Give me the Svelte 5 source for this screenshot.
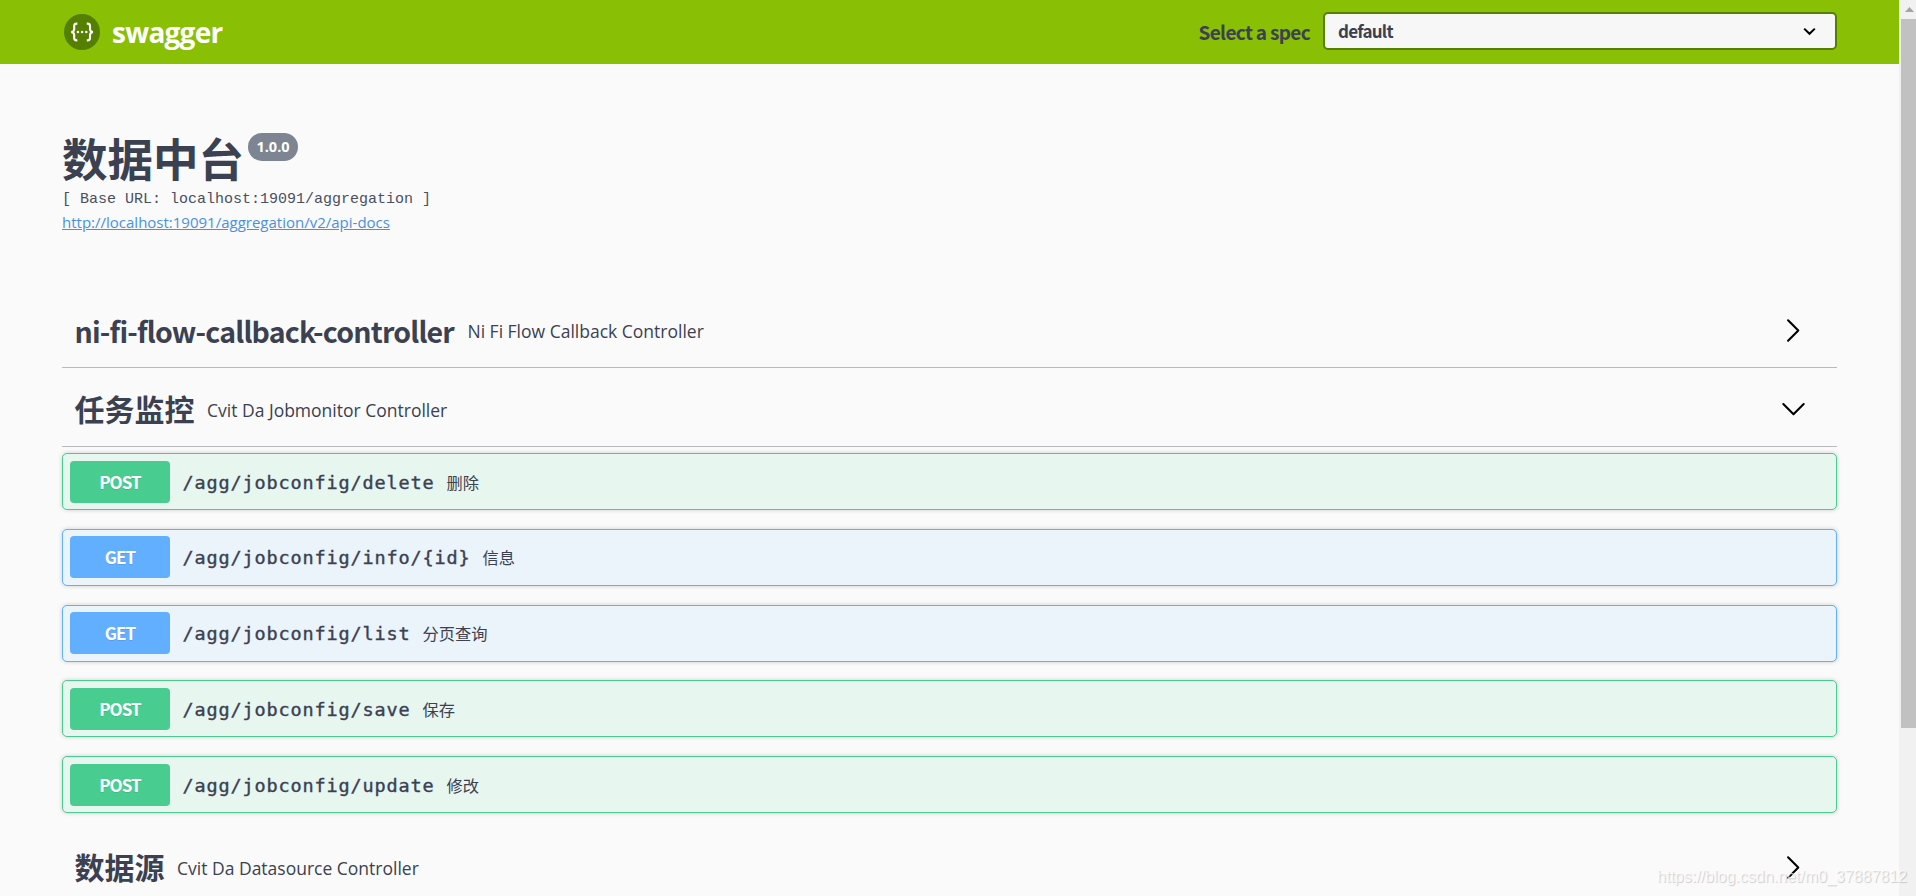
<script>
	const spec = 'default';

	const controllers = [
		{ name: 'ni-fi-flow-callback-controller', description: 'Ni Fi Flow Callback Controller', open: false, operations: [] },
		{
			name: '任务监控',
			description: 'Cvit Da Jobmonitor Controller',
			open: true,
			operations: [
				{ method: 'post', path: '/agg/jobconfig/delete', summary: '删除' },
				{ method: 'get', path: '/agg/jobconfig/info/{id}', summary: '信息' },
				{ method: 'get', path: '/agg/jobconfig/list', summary: '分页查询' },
				{ method: 'post', path: '/agg/jobconfig/save', summary: '保存' },
				{ method: 'post', path: '/agg/jobconfig/update', summary: '修改' }
			]
		},
		{ name: '数据源', description: 'Cvit Da Datasource Controller', open: false, operations: [] }
	];

	let tags = $state(controllers);

	function toggle(tag) {
		tag.open = !tag.open;
	}
</script>

<div class="viewport">
	<div class="swagger-ui">
		<header class="topbar">
			<a class="brand" href="#top">
				<svg class="brand-mark" viewBox="0 0 36 36" aria-hidden="true">
					<circle cx="18" cy="18" r="18" fill="#547f00" />
					<g fill="none" stroke="#fff" stroke-width="2.1">
						<path d="M13.4 9.6h-.8c-1.7 0-2.4.8-2.4 2.3v3c0 1.8-.8 2.8-2.9 3.1 2.1.3 2.9 1.3 2.9 3.1v3c0 1.5.7 2.3 2.4 2.3h.8" />
						<path d="M22.8 9.6h.8c1.7 0 2.4.8 2.4 2.3v3c0 1.8.8 2.8 2.9 3.1-2.1.3-2.9 1.3-2.9 3.1v3c0 1.5-.7 2.3-2.4 2.3h-.8" />
					</g>
					<g fill="#fff">
						<circle cx="13.9" cy="18" r="1.3" />
						<circle cx="18.1" cy="18" r="1.3" />
						<circle cx="22.3" cy="18" r="1.3" />
					</g>
				</svg>
				<span class="brand-name">swagger</span>
			</a>
			<div class="spec-picker">
				<span class="spec-label">Select a spec</span>
				<button type="button" class="spec-select">
					<span>{spec}</span>
					<svg width="13" height="9" viewBox="0 0 13 9" aria-hidden="true">
						<path d="M1.2 1.6l5.3 5.2 5.3-5.2" fill="none" stroke="#000" stroke-width="2" />
					</svg>
				</button>
			</div>
		</header>

		<main class="wrapper">
			<section class="info">
				<div class="title-row">
					<h2 class="title">数据中台</h2>
					<span class="version">1.0.0</span>
				</div>
				<div class="base-url">[ Base URL: localhost:19091/aggregation ]</div>
				<a class="docs-link" href="#docs">http://localhost:19091/aggregation/v2/api-docs</a>
			</section>

			{#each tags as tag}
				<section class="tag-section">
					<button type="button" class="tag" aria-expanded={tag.open} onclick={() => toggle(tag)}>
						<span class="tag-name" class:latin={/^[a-z]/.test(tag.name)}>{tag.name}</span>
						<span class="tag-description">{tag.description}</span>
						<svg class="arrow" class:arrow-open={tag.open} viewBox="0 0 24 24" aria-hidden="true">
							<path d="M6.8 2.2L16.6 12 6.8 21.8" fill="none" stroke="#000" stroke-width="2" stroke-linejoin="round" stroke-linecap="round" />
						</svg>
					</button>
					{#if tag.open}
						{#each tag.operations as op}
							<div class="opblock opblock-{op.method}">
								<span class="method">{op.method.toUpperCase()}</span>
								<span class="path">{op.path}</span>
								<span class="summary">{op.summary}</span>
							</div>
						{/each}
					{/if}
				</section>
			{/each}
		</main>
	</div>

	<div class="scrollbar">
		<svg class="scroll-up" width="15" height="19" viewBox="0 0 15 19" aria-hidden="true">
			<path d="M4 12h9L8.5 7z" fill="#a3a3a3" />
		</svg>
		<div class="scroll-thumb"></div>
	</div>

	<div class="watermark">https://blog.csdn.net/m0_37887812</div>
</div>

<style>
	:global(body) {
		background: #fafafa;
	}

	.viewport {
		position: relative;
		display: grid;
		grid-template-columns: 1fr 17px;
		height: 896px;
		overflow: hidden;
		color: #3b4151;
		font-family: 'Open Sans', 'Noto Sans CJK SC', sans-serif;
	}

	.swagger-ui {
		height: 896px;
		overflow: hidden;
	}

	.topbar {
		display: flex;
		align-items: center;
		justify-content: space-between;
		box-sizing: border-box;
		height: 64px;
		padding: 0 62px 0 64px;
		background: #89bf04;
	}

	.brand {
		display: flex;
		align-items: center;
		gap: 12px;
		color: #fff;
		text-decoration: none;
	}

	.brand-mark {
		width: 36px;
		height: 36px;
	}

	.brand-name {
		font-size: 28px;
		font-weight: 700;
		line-height: 36px;
		letter-spacing: -0.75px;
	}

	.spec-picker {
		display: flex;
		align-items: center;
		gap: 13px;
		margin-bottom: 2px;
		font-family: 'Noto Sans CJK SC', sans-serif;
		font-weight: 700;
	}

	.spec-label {
		padding-top: 2px;
		font-size: 19px;
		line-height: 28px;
		letter-spacing: -0.68px;
	}

	.spec-select {
		display: flex;
		align-items: center;
		justify-content: space-between;
		box-sizing: border-box;
		width: 514px;
		height: 38px;
		padding: 0 19px 0 13px;
		border: 2px solid #547f00;
		border-radius: 5px;
		background: #f7f7f7;
		color: #3b4151;
		font: inherit;
		font-size: 17px;
		line-height: 30px;
		letter-spacing: -0.75px;
	}

	.wrapper {
		padding: 0 62px;
	}

	.info {
		box-sizing: border-box;
		height: 231px;
		padding-top: 69px;
	}

	.title-row {
		display: flex;
		align-items: flex-start;
		gap: 4px;
		height: 56px;
	}

	.title {
		margin: 0;
		font-family: 'Noto Sans CJK SC', sans-serif;
		font-size: 45.5px;
		font-weight: 700;
		line-height: 48px;
	}

	.version {
		box-sizing: border-box;
		width: 50px;
		height: 28px;
		border-radius: 14px;
		background: #7d8492;
		color: #fff;
		font-size: 14.5px;
		font-weight: 700;
		line-height: 28px;
		text-align: center;
	}

	.base-url {
		font-family: 'Liberation Mono', monospace;
		font-size: 15px;
		line-height: 22px;
		color: #4b5060;
	}

	.docs-link {
		display: inline-block;
		color: #4990e2;
		font-size: 15px;
		line-height: 20px;
		margin-top: 1px;
	}

	.tag {
		display: flex;
		align-items: center;
		box-sizing: border-box;
		width: 100%;
		height: 72.75px;
		margin: 0 0 6.25px;
		padding: 0 31px 0 12.5px;
		border: 0;
		border-bottom: 1px solid rgba(59, 65, 81, 0.35);
		background: none;
		color: #3b4151;
		font-family: inherit;
		text-align: left;
		cursor: pointer;
	}

	.tag-name {
		padding-bottom: 3px;
		font-family: 'Noto Sans CJK SC', sans-serif;
		font-size: 30px;
		font-weight: 700;
		line-height: 40px;
	}

	.latin {
		padding: 0 1px 0 0;
		font-size: 28.5px;
		letter-spacing: -0.8px;
	}

	.tag-description {
		flex: 1;
		padding-left: 12.5px;
		font-size: 17.5px;
		line-height: 24px;
	}

	.arrow {
		width: 25px;
		height: 25px;
	}

	.arrow-open {
		transform: rotate(90deg);
	}

	.opblock {
		display: flex;
		align-items: center;
		box-sizing: border-box;
		height: 57px;
		margin-bottom: 18.75px;
		padding: 0 7px;
		border: 1px solid;
		border-radius: 5px;
		box-shadow: 0 0 4px rgba(0, 0, 0, 0.19);
	}

	.opblock-post {
		border-color: #49cc90;
		background: #e8f6f0;
	}

	.opblock-get {
		border-color: #61affe;
		background: #ebf3fb;
	}

	.method {
		width: 100px;
		height: 42px;
		border-radius: 4px;
		color: #fff;
		font-family: 'Noto Sans CJK SC', sans-serif;
		font-size: 17px;
		font-weight: 700;
		line-height: 42px;
		letter-spacing: -0.9px;
		text-align: center;
		text-shadow: 0 1px 0 rgba(0, 0, 0, 0.1);
	}

	.opblock-post .method {
		background: #49cc90;
	}

	.opblock-get .method {
		background: #61affe;
	}

	.path {
		padding: 2px 0 0 12.5px;
		font-family: 'DejaVu Sans Mono', monospace;
		font-size: 18.5px;
		line-height: 30px;
		letter-spacing: 0.86px;
		-webkit-text-stroke: 0.4px #3b4151;
	}

	.summary {
		padding-left: 12px;
		font-family: 'Noto Sans CJK SC', sans-serif;
		font-size: 16.25px;
		font-weight: 400;
		line-height: 24px;
	}

	.scrollbar {
		padding-left: 2px;
		background: #f1f1f1;
	}

	.scroll-up {
		display: block;
	}

	.scroll-thumb {
		height: 709px;
		background: #c1c1c1;
	}

	.watermark {
		position: absolute;
		right: 9px;
		bottom: 9px;
		color: rgba(255, 255, 255, 0.7);
		font-family: 'Liberation Sans', sans-serif;
		font-size: 16px;
		line-height: 20px;
		text-shadow: 1px 1px 1px rgba(0, 0, 0, 0.18);
		pointer-events: none;
	}
</style>
